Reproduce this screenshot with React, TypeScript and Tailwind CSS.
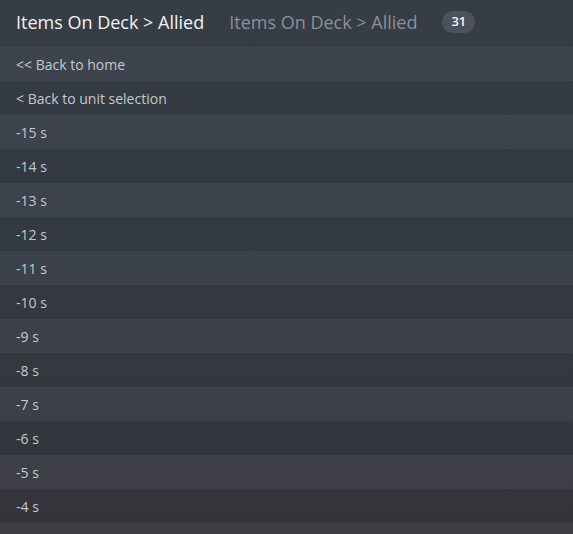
import React from 'react';

export default function App() {
  const rows = [
    '<< Back to home',
    '< Back to unit selection',
    '-15 s',
    '-14 s',
    '-13 s',
    '-12 s',
    '-11 s',
    '-10 s',
    '-9 s',
    '-8 s',
    '-7 s',
    '-6 s',
    '-5 s',
    '-4 s',
  ];

  return (
    <div
      className="h-[534px] w-[573px] overflow-hidden bg-gradient-to-b from-[#39414b] via-[#393f48] to-[#3a3b41]"
      style={{ fontFamily: '"Open Sans", "Noto Sans", sans-serif' }}
    >
      {/* Header */}
      <div className="flex h-[47px] items-center bg-black/[0.06] pb-[3px] pl-4">
        <h1 className="text-[18px] text-[#f2f3f4]">Items On Deck &gt; Allied</h1>
        <span className="ml-[25px] text-[18px] text-[#8b9098]">Items On Deck &gt; Allied</span>
        <span className="ml-[25px] rounded-full bg-[#4b525b] px-[9px] py-[1px] text-[13px] font-semibold text-[#f4f4f5]">
          31
        </span>
      </div>

      {/* List */}
      <ul>
        {rows.map((label, i) => (
          <li
            key={label}
            className={`flex h-[34px] items-center pl-4 pt-[1px] text-[14px] text-[#c6c9ce] ${
              i % 2 === 0 ? 'bg-white/[0.02]' : 'bg-black/[0.09]'
            }`}
          >
            {label}
          </li>
        ))}
        <li className="h-[34px] bg-white/[0.02]" />
      </ul>
    </div>
  );
}
